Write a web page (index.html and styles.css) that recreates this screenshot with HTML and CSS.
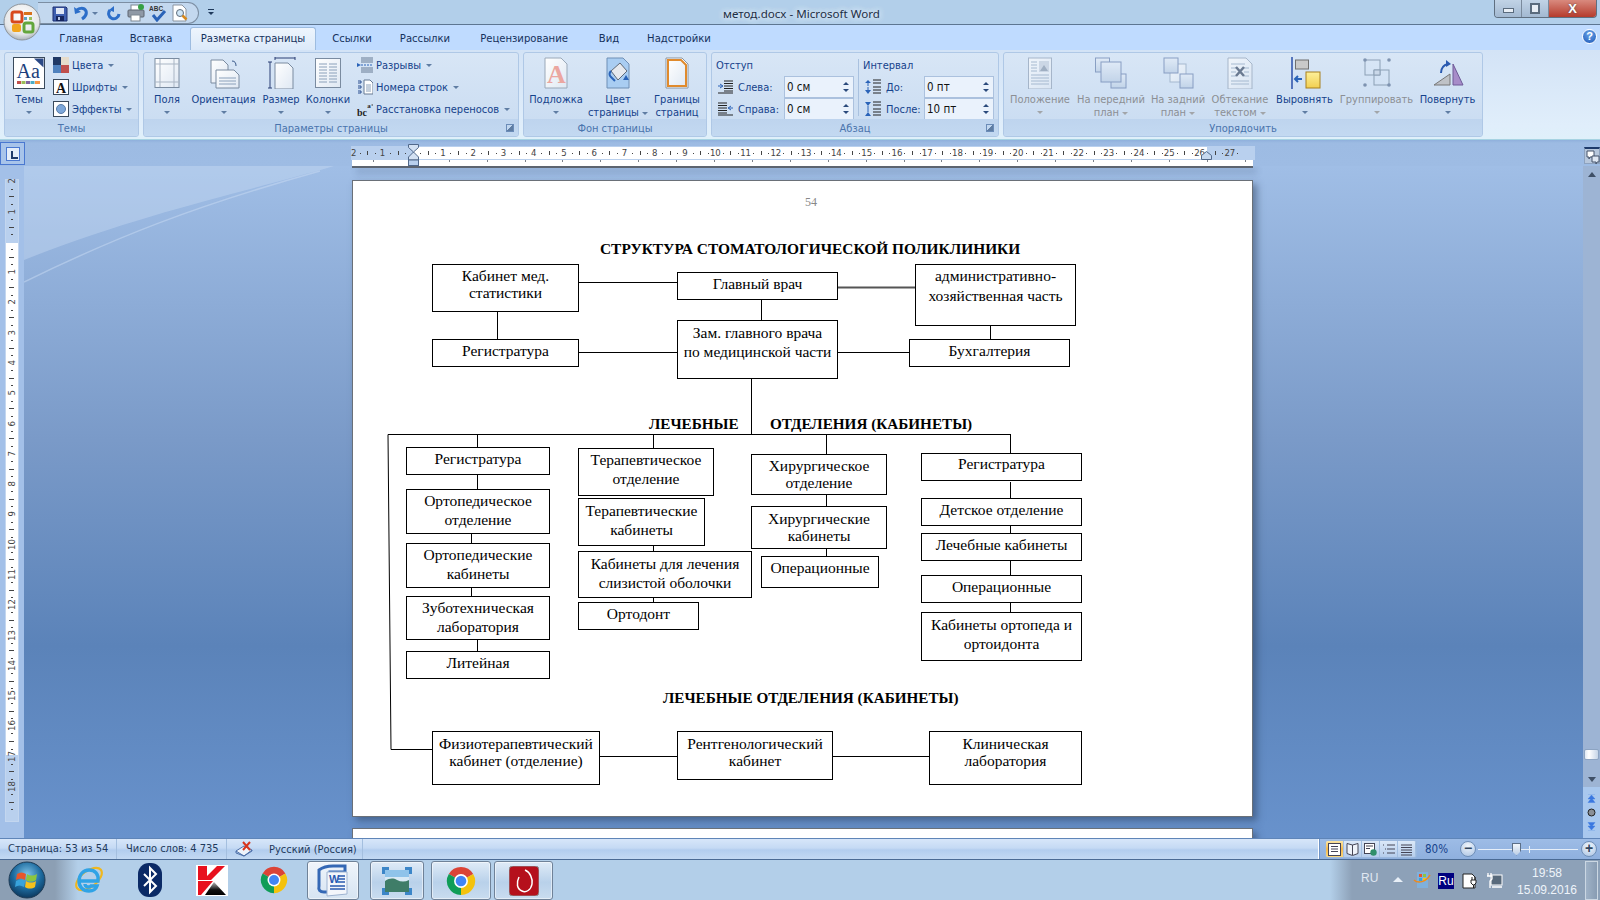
FILE: index.html
```html
<!DOCTYPE html>
<html lang="ru">
<head>
<meta charset="utf-8">
<title>метод.docx - Microsoft Word</title>
<link rel="stylesheet" href="styles.css">
</head>
<body>
<svg class="defs" width="0" height="0">
  <defs>
    <linearGradient id="pg" x1="0" y1="0" x2="1" y2="1"><stop offset="0" stop-color="#fff"/><stop offset="1" stop-color="#dfe8f3"/></linearGradient>
    <linearGradient id="sq" x1="0" y1="0" x2="0" y2="1"><stop offset="0" stop-color="#e6eef8"/><stop offset="1" stop-color="#b8cbe2"/></linearGradient>
    <linearGradient id="yl" x1="0" y1="0" x2="0" y2="1"><stop offset="0" stop-color="#fdf09a"/><stop offset="1" stop-color="#f2cf50"/></linearGradient>
    <linearGradient id="kb" x1="0" y1="0" x2="0" y2="1"><stop offset="0" stop-color="#b8b8b8"/><stop offset=".6" stop-color="#111"/><stop offset="1" stop-color="#000"/></linearGradient>
    <radialGradient id="orbg" cx=".5" cy=".35" r=".7"><stop offset="0" stop-color="#7fc4e8"/><stop offset=".55" stop-color="#1d6b9f"/><stop offset="1" stop-color="#0a2f52"/></radialGradient>
    <radialGradient id="offg" cx=".5" cy=".35" r=".7"><stop offset="0" stop-color="#fff"/><stop offset=".7" stop-color="#e4e6e8"/><stop offset="1" stop-color="#9aa3ab"/></radialGradient>
    <symbol id="chrome" viewBox="0 0 32 32">
      <path d="M16 16L3 8.500A15 15 0 0 1 29 8.500Z" fill="#db4437"/>
      <path d="M16 16L16 31A15 15 0 0 1 3 8.500Z" fill="#0f9d58"/>
      <path d="M16 16L29 8.500A15 15 0 0 1 16 31Z" fill="#f4c20d"/>
      <circle cx="16" cy="16" r="7.400" fill="#fff"/><circle cx="16" cy="16" r="5.700" fill="#4285f4"/>
    </symbol>
  </defs>
</svg>

<header class="titlebar">
  <div class="office">
    <svg width="38" height="38" viewBox="0 0 38 38"><circle cx="19" cy="19" r="18" fill="url(#offg)" stroke="#8d949b"/><rect x="9" y="9" width="10" height="10" rx="2" fill="none" stroke="#d8481c" stroke-width="3"/><rect x="9" y="21" width="9" height="8" rx="2" fill="#f1a51e"/><rect x="21" y="20" width="9" height="9" rx="2" fill="none" stroke="#63a63c" stroke-width="3"/><rect x="21" y="9" width="8" height="3" fill="#d8721c"/><rect x="21" y="14" width="3" height="3" fill="#5aa4c8"/><rect x="26" y="14" width="3" height="3" fill="#9cc05a"/></svg>
  </div>
  <div class="qat">
    <svg class="q1" width="16" height="16" viewBox="0 0 16 16"><path d="M1 1h13l1 1v13H1z" fill="#3e5fb0" stroke="#1d2f70"/><rect x="4" y="2" width="8" height="6" fill="#dfe6f5"/><rect x="4" y="10" width="8" height="5" fill="#16265e"/><rect x="6" y="11" width="2" height="3" fill="#b8c6e6"/></svg>
    <svg class="q2" width="16" height="16" viewBox="0 0 16 16"><path d="M3 6c2-3 8-4 10 0 1 3-1 6-4 8" fill="none" stroke="#2c6ec9" stroke-width="3"/><path d="M1 2l1 7 6-2z" fill="#2c6ec9"/></svg>
    <i class="car q3"></i>
    <svg class="q4" width="16" height="16" viewBox="0 0 16 16"><path d="M13 9a5.200 5.200 0 1 1-9-4" fill="none" stroke="#2c6ec9" stroke-width="3"/><path d="M8 1v6l-5-2z" fill="#2c6ec9"/></svg>
    <svg class="q5" width="18" height="18" viewBox="0 0 18 18"><rect x="4" y="1" width="9" height="6" fill="#fff" stroke="#7d8792"/><rect x="1" y="6" width="16" height="7" rx="1" fill="#8f99a6" stroke="#5c6570"/><rect x="4" y="11" width="9" height="6" fill="#fff" stroke="#7d8792"/><circle cx="14" cy="3" r="3" fill="#36a043"/></svg>
    <svg class="q6" width="18" height="18" viewBox="0 0 18 18"><text x="0" y="6.500" class="abc">ABC</text><path d="M4 11l4 5 8-9" fill="none" stroke="#2a63b8" stroke-width="3"/></svg>
    <svg class="q7" width="16" height="18" viewBox="0 0 16 18"><path d="M1 1h9l4 4v12H1z" fill="#fff" stroke="#8a94a0"/><circle cx="8" cy="9" r="3.500" fill="#cfe6f7" stroke="#5d6b7a"/><path d="M10.500 11.500l4 4" stroke="#d78a1e" stroke-width="2.500"/></svg>
  </div>
  <div class="qover"><b></b><i class="car"></i></div>
  <div class="wtitle">метод.docx - Microsoft Word</div>
  <div class="wctl">
    <div class="wb"><span class="wmin"></span></div>
    <div class="wb"><span class="wmax"></span></div>
    <div class="wb wclose">X</div>
  </div>
</header>

<nav class="tabs">
  <span class="tab t1">Главная</span>
  <span class="tab t2">Вставка</span>
  <span class="tab active">Разметка страницы</span>
  <span class="tab t4">Ссылки</span>
  <span class="tab t5">Рассылки</span>
  <span class="tab t6">Рецензирование</span>
  <span class="tab t7">Вид</span>
  <span class="tab t8">Надстройки</span>
  <span class="help">?</span>
</nav>

<section class="ribbon">
  <div class="group g1">
    <div class="gbody">
      <div class="big">
        <svg width="32" height="32" viewBox="0 0 32 32"><rect x=".5" y=".5" width="31" height="31" fill="#fff" stroke="#3a4a5c"/><path d="M21 1.500h9.500v9z" fill="#2c4a86"/><text x="3.500" y="21" class="aa">Aa</text><rect x="4" y="24" width="4" height="3" fill="#c0504d"/><rect x="8.500" y="24" width="4" height="3" fill="#9bbb59"/><rect x="13" y="24" width="4" height="3" fill="#8064a2"/><rect x="17.500" y="24" width="4" height="3" fill="#4bacc6"/><rect x="22" y="24" width="5" height="3" fill="#f79646"/></svg>
        <span class="lab">Темы</span><i class="car"></i>
      </div>
      <div class="smalls">
        <div class="srow"><svg width="16" height="16" viewBox="0 0 16 16"><rect width="8" height="8" fill="#1f3864"/><rect x="8" width="8" height="8" fill="#e6dccb"/><rect y="8" width="8" height="8" fill="#4f81bd"/><rect x="8" y="8" width="8" height="8" fill="#c0504d"/></svg><span>Цвета</span><i class="car"></i></div>
        <div class="srow"><svg width="16" height="16" viewBox="0 0 16 16"><rect x=".5" y=".5" width="15" height="15" fill="#fff" stroke="#3a4a5c"/><text x="3" y="13.500" class="fa">A</text></svg><span>Шрифты</span><i class="car"></i></div>
        <div class="srow"><svg width="16" height="16" viewBox="0 0 16 16"><rect x=".5" y=".5" width="15" height="15" fill="#fff" stroke="#3a4a5c"/><circle cx="8" cy="8" r="4.500" fill="#7da7da" stroke="#5a7da8"/></svg><span>Эффекты</span><i class="car"></i></div>
      </div>
    </div>
    <div class="glabel">Темы</div>
  </div>

  <div class="group g2">
    <div class="gbody">
      <div class="big">
        <svg width="32" height="32" viewBox="0 0 32 32"><rect x="4" y="1.500" width="24" height="29" fill="url(#pg)" stroke="#7a8ba0"/><path d="M9 2v28M23 2v28M4 7h24M4 25h24" stroke="#a9b5c4"/></svg>
        <span class="lab">Поля</span><i class="car"></i>
      </div>
      <div class="big">
        <svg width="32" height="32" viewBox="0 0 32 32"><path d="M3 3h12l5 5v18H3z" fill="url(#pg)" stroke="#7a8ba0"/><path d="M8 13h18l5 5v13H8z" fill="url(#pg)" stroke="#7a8ba0"/><path d="M11 21h17M11 24h17M11 27h17" stroke="#8aa0ba"/><path d="M24 4c3 0 4 2 4 5" fill="none" stroke="#3a5a8a"/></svg>
        <span class="lab">Ориентация</span><i class="car"></i>
      </div>
      <div class="big">
        <svg width="32" height="32" viewBox="0 0 32 32"><path d="M10 6h13l5 5v21H10z" fill="url(#pg)" stroke="#7a8ba0"/><path d="M10 1h20M10 0v3M30 0v3M5 5v26M3 5h4M3 31h4" stroke="#2b3f75"/></svg>
        <span class="lab">Размер</span><i class="car"></i>
      </div>
      <div class="big">
        <svg width="32" height="32" viewBox="0 0 32 32"><rect x="3.500" y="1.500" width="25" height="29" fill="url(#pg)" stroke="#7a8ba0"/><path d="M7 7h8M17 7h8M7 10h8M17 10h8M7 13h8M17 13h8M7 16h8M17 16h8M7 19h8M17 19h8M7 22h8M17 22h8M7 25h8M17 25h8" stroke="#8aa0ba"/></svg>
        <span class="lab">Колонки</span><i class="car"></i>
      </div>
      <div class="smalls">
        <div class="srow"><svg width="16" height="16" viewBox="0 0 16 16"><path d="M4 1h12M4 3h12M4 5h12M4 11h12M4 13h12M4 15h12" stroke="#667a94"/><path d="M0 6l4 2-4 2z" fill="#2a63b8"/><path d="M4 8h12" stroke="#2a63b8" stroke-dasharray="2 1"/></svg><span>Разрывы</span><i class="car"></i></div>
        <div class="srow"><svg width="16" height="16" viewBox="0 0 16 16"><path d="M7 1h6l3 3v11H7z" fill="#fff" stroke="#667a94"/><path d="M9 6h5M9 8h5M9 10h5M9 12h5" stroke="#8aa0ba"/><path d="M1 2h3v2H1M1 7h3v2H1M1 12h3v2H1" fill="none" stroke="#2a4f90"/></svg><span>Номера строк</span><i class="car"></i></div>
        <div class="srow"><svg width="16" height="16" viewBox="0 0 16 16"><text x="0" y="15" class="bc">bc</text><text x="10.200" y="7" class="bc2">a</text><path d="M14.500 4H16" stroke="#333"/></svg><span>Расстановка переносов</span><i class="car"></i></div>
      </div>
    </div>
    <div class="glabel">Параметры страницы</div>
    <i class="launch l2"></i>
  </div>

  <div class="group g3">
    <div class="gbody">
      <div class="big">
        <svg width="32" height="32" viewBox="0 0 32 32"><path d="M5 1h16l6 6v24H5z" fill="url(#pg)" stroke="#9aa8b8"/><text x="7" y="26" class="wm">A</text></svg>
        <span class="lab">Подложка</span><i class="car"></i>
      </div>
      <div class="big">
        <svg width="32" height="32" viewBox="0 0 32 32"><path d="M5 1h16l6 6v24H5z" fill="#a9cdf2" stroke="#6f8fb5"/><path d="M9 14l9-8 7 8-9 9z" fill="#e6e9ee" stroke="#606a78"/><path d="M9 14c-2 2-2 4 0 6l4 4" fill="none" stroke="#2a63b8" stroke-width="2"/><path d="M24 18l3 5h-6z" fill="#2a63b8"/></svg>
        <span class="lab">Цвет<br>страницы <i class="car"></i></span>
      </div>
      <div class="big">
        <svg width="32" height="32" viewBox="0 0 32 32"><path d="M5 1h16l6 6v24H5z" fill="#fff" stroke="#8a94a0"/><path d="M7 3h13l5 5v21H7z" fill="url(#pg)" stroke="#e08a2c" stroke-width="2"/></svg>
        <span class="lab">Границы<br>страниц</span>
      </div>
    </div>
    <div class="glabel">Фон страницы</div>
  </div>

  <div class="group g4">
    <div class="gbody para">
      <div class="pcol pa">
        <div class="phead">Отступ</div>
        <div class="prow">
          <svg width="15" height="14" viewBox="0 0 15 14"><path d="M6 1h9M6 3.500h9M6 6h9M6 8.500h9M6 11h9M0 13h15" stroke="#222"/><path d="M0 6h4M2 4l3 2-3 2" fill="none" stroke="#2a63b8"/></svg>
          <label>Слева:</label><div class="spin"><span>0 см</span><em><i class="up"></i><i class="dn"></i></em></div>
        </div>
        <div class="prow">
          <svg width="15" height="14" viewBox="0 0 15 14"><path d="M0 1h9M0 3.500h9M0 6h9M0 8.500h9M0 11h9M0 13h15" stroke="#222"/><path d="M15 6h-4M13 4l-3 2 3 2" fill="none" stroke="#2a63b8"/></svg>
          <label>Справа:</label><div class="spin"><span>0 см</span><em><i class="up"></i><i class="dn"></i></em></div>
        </div>
      </div>
      <div class="pcol pb">
        <div class="phead">Интервал</div>
        <div class="prow">
          <svg width="16" height="16" viewBox="0 0 16 16"><path d="M8 1h8M8 4h8M8 11h8M8 14h8M8 8h8" stroke="#222"/><path d="M3 1l3 3H0zM0 11h6l-3 4z" fill="#2a63b8"/><path d="M3 4v3M3 8v3" stroke="#2a63b8"/></svg>
          <label>До:</label><div class="spin"><span>0 пт</span><em><i class="up"></i><i class="dn"></i></em></div>
        </div>
        <div class="prow">
          <svg width="16" height="16" viewBox="0 0 16 16"><path d="M8 1h8M8 4h8M8 11h8M8 14h8M8 8h8" stroke="#222"/><path d="M0 1h6L3 5zM3 11l3 4H0z" fill="#2a63b8"/><path d="M3 5v3M3 8v3" stroke="#2a63b8"/></svg>
          <label>После:</label><div class="spin"><span>10 пт</span><em><i class="up"></i><i class="dn"></i></em></div>
        </div>
      </div>
    </div>
    <div class="glabel">Абзац</div>
    <i class="launch l4"></i>
  </div>

  <div class="group g5">
    <div class="gbody">
      <div class="big off">
        <svg width="32" height="32" viewBox="0 0 32 32"><rect x="4.500" y="1" width="23" height="31" fill="url(#pg)" stroke="#8a9ab0"/><path d="M7 5h6M7 8h6M7 11h6M7 14h6M7 18h18M7 21h18M7 24h18M7 27h18" stroke="#8aa0ba"/><rect x="15" y="4" width="10" height="11" fill="#c5cfdc"/><path d="M16 14l4-6 4 6z" fill="#7f8fa3"/></svg>
        <span class="lab">Положение</span><i class="car"></i>
      </div>
      <div class="big off">
        <svg width="32" height="32" viewBox="0 0 32 32"><rect x=".5" y="1" width="14" height="14" fill="url(#sq)" stroke="#5a75a5"/><rect x="16" y="17" width="15" height="14" fill="url(#sq)" stroke="#5a75a5"/><rect x="6" y="5" width="20" height="20" fill="url(#sq)" stroke="#5a75a5"/></svg>
        <span class="lab">На передний<br>план <i class="car"></i></span>
      </div>
      <div class="big off">
        <svg width="32" height="32" viewBox="0 0 32 32"><rect x="8" y="7" width="16" height="18" fill="url(#pg)" stroke="#8aa0ba"/><rect x="2" y="1" width="14" height="15" fill="url(#sq)" stroke="#5a75a5"/><rect x="18" y="17" width="13" height="14" fill="url(#sq)" stroke="#5a75a5"/></svg>
        <span class="lab">На задний<br>план <i class="car"></i></span>
      </div>
      <div class="big off">
        <svg width="32" height="32" viewBox="0 0 32 32"><path d="M4 1h18l6 6v25H4z" fill="url(#pg)" stroke="#8a9ab0"/><path d="M7 7h14M7 11h5M20 11h5M7 15h5M20 15h5M7 19h5M20 19h5M7 24h18M7 27h18" stroke="#8aa0ba"/><path d="M12 10l8 9M20 10l-8 9" stroke="#2a3a55" stroke-width="2.500"/></svg>
        <span class="lab">Обтекание<br>текстом <i class="car"></i></span>
      </div>
      <div class="big">
        <svg width="32" height="32" viewBox="0 0 32 32"><path d="M3 0v32" stroke="#2b4fa8" stroke-width="1.500"/><rect x="6.500" y="3" width="13" height="9" fill="#c9c9c9" stroke="#6f6f6f"/><rect x="17" y="15" width="14" height="16" fill="url(#yl)" stroke="#a8801f"/><path d="M13 22H6M9 19l-3 3 3 3" fill="none" stroke="#2a63b8" stroke-width="2"/></svg>
        <span class="lab">Выровнять</span><i class="car"></i>
      </div>
      <div class="big off">
        <svg width="32" height="32" viewBox="0 0 32 32"><rect x="4" y="3" width="15" height="15" fill="none" stroke="#62788f"/><rect x="13" y="13" width="15" height="15" fill="none" stroke="#62788f"/><path d="M13 13h6v5h-6z" fill="#c5d2e2" stroke="#62788f"/><circle cx="4" cy="3" r="1.800" fill="#4c6488"/><circle cx="28" cy="3" r="1.800" fill="#4c6488"/><circle cx="4" cy="28" r="1.800" fill="#4c6488"/><circle cx="28" cy="28" r="1.800" fill="#4c6488"/></svg>
        <span class="lab">Группировать</span><i class="car"></i>
      </div>
      <div class="big">
        <svg width="32" height="32" viewBox="0 0 32 32"><path d="M18 28H2L18 17z" fill="#bfc2c7" stroke="#777"/><path d="M21 7l10 21H21z" fill="#a78cc9" stroke="#6e5a98"/><path d="M9 16c0-5 3-8 7-9" fill="none" stroke="#2a5ab0" stroke-width="2"/><path d="M14 3l5 4-5 3z" fill="#2a5ab0"/></svg>
        <span class="lab">Повернуть</span><i class="car"></i>
      </div>
    </div>
    <div class="glabel">Упорядочить</div>
  </div>
</section>

<div class="rulerrow">
  <div class="tabbtn"><span></span></div>
  <div class="hruler">
    <div class="hcells">
      <span>2</span><span>1</span><span></span><span>1</span><span>2</span><span>3</span><span>4</span><span>5</span><span>6</span><span>7</span><span>8</span><span>9</span><span>10</span><span>11</span><span>12</span><span>13</span><span>14</span><span>15</span><span>16</span><span>17</span><span>18</span><span>19</span><span>20</span><span>21</span><span>22</span><span>23</span><span>24</span><span>25</span><span>26</span><span>27</span>
    </div>
    <svg class="mark-l" width="11" height="22" viewBox="0 0 11 22"><path d="M.5.5h10v3L5.500 8l5 5v3H.5v-3l5-5-5-4.500z" fill="#d3e1f3" stroke="#51688a"/><rect x=".5" y="16" width="10" height="5.500" fill="#b9d0ee" stroke="#51688a"/></svg>
    <svg class="mark-r" width="11" height="9" viewBox="0 0 11 9"><path d="M5.500.5l5 4v4H.5v-4z" fill="#c7d9f0" stroke="#51688a"/></svg>
  </div>
  <div class="rulericon">
    <svg width="14" height="14" viewBox="0 0 14 14"><path d="M1 1h7v6H4l-1 2V7H1z" fill="#fff" stroke="#44536a"/><path d="M6 6h7v6h-2l-1 2v-2H6z" fill="#dfe7f3" stroke="#44536a"/></svg>
  </div>
</div>

<main class="work">
  <div class="vruler">
    <div class="vcells">
      <span><b>2</b></span><span><b>1</b></span><span></span><span><b>1</b></span><span><b>2</b></span><span><b>3</b></span><span><b>4</b></span><span><b>5</b></span><span><b>6</b></span><span><b>7</b></span><span><b>8</b></span><span><b>9</b></span><span><b>10</b></span><span><b>11</b></span><span><b>12</b></span><span><b>13</b></span><span><b>14</b></span><span><b>15</b></span><span><b>16</b></span><span><b>17</b></span><span><b>18</b></span><span></span>
    </div>
  </div>
  <div class="canvas">
    <svg class="swoosh" width="340" height="130" viewBox="0 0 340 130"><path d="M0 94C120 46 230 24 310 0H0z" fill="#c9dcf3" fill-opacity=".42"/><path d="M0 116C90 72 170 40 296 5" fill="none" stroke="#c9dcf3" stroke-opacity=".5" stroke-width="1.500"/></svg>
    <div class="prevpage"></div>
    <article class="page">
      <div class="diagram">
        <svg class="wires" width="900" height="633" viewBox="0 0 900 633">
          <path class="w" d="M226 98.500H324M408.500 116V136M144.500 128V155M637.500 140V155M226 168.500H324M485 168.500H556M398.500 195V250.500M35 250.500H657.500M35 250.500L38 565.500H79M124.500 250V263M300.500 250V264M473.500 250V270M657.500 250V270M124.500 291V305M118.500 350V359M118.500 404V412M124.500 456V467M300.500 362V367M300.500 414V418M473.500 311V322M473.500 365V372M657.500 298V314M657.500 342V349M657.500 377V391M657.500 419V428M247 572.500H324M480 572.500H576"/>
          <path class="wg" d="M485 103.500H562"/>
        </svg>
        <div class="pnum">54</div>
        <h1 class="h-main">СТРУКТУРА СТОМАТОЛОГИЧЕСКОЙ ПОЛИКЛИНИКИ</h1>
        <h2 class="h-a">ЛЕЧЕБНЫЕ</h2>
        <h2 class="h-b">ОТДЕЛЕНИЯ (КАБИНЕТЫ)</h2>
        <h2 class="h-c">ЛЕЧЕБНЫЕ ОТДЕЛЕНИЯ (КАБИНЕТЫ)</h2>

        <div class="node n-a1 l17">Кабинет мед.<br>статистики</div>
        <div class="node n-a2">Главный врач</div>
        <div class="node n-a3 l20">административно-<br>хозяйственная часть</div>
        <div class="node n-a4">Регистратура</div>
        <div class="node n-a5 l19 dn1">Зам. главного врача<br>по медицинской части</div>
        <div class="node n-a6">Бухгалтерия</div>

        <div class="node n-b1">Регистратура</div>
        <div class="node n-b2 l19">Ортопедическое<br>отделение</div>
        <div class="node n-b3 l19">Ортопедические<br>кабинеты</div>
        <div class="node n-b4 l19">Зуботехническая<br>лаборатория</div>
        <div class="node n-b5">Литейная</div>

        <div class="node n-c1 l19">Терапевтическое<br>отделение</div>
        <div class="node n-c2 l19 dn1">Терапевтические<br>кабинеты</div>
        <div class="node n-c3 l19 dn1">Кабинеты для лечения<br>слизистой оболочки</div>
        <div class="node n-c4">Ортодонт</div>

        <div class="node n-d1 l17">Хирургическое<br>отделение</div>
        <div class="node n-d2 l17 dn1">Хирургические<br>кабинеты</div>
        <div class="node n-d3">Операционные</div>

        <div class="node n-e1 up1">Регистратура</div>
        <div class="node n-e2">Детское отделение</div>
        <div class="node n-e3">Лечебные кабинеты</div>
        <div class="node n-e4">Операционные</div>
        <div class="node n-e5 l19 dn1">Кабинеты ортопеда и<br>ортоидонта</div>

        <div class="node n-f1 l17 dn1">Физиотерапевтический<br>кабинет (отделение)</div>
        <div class="node n-f2 l17 dn1">Рентгенологический<br>кабинет</div>
        <div class="node n-f3 l17 dn1">Клиническая<br>лаборатория</div>
      </div>
    </article>
    <div class="nextpage"></div>
  </div>
  <aside class="scroll">
    <div class="sb-btn"><i class="up"></i></div>
    <div class="sb-track"><div class="sb-thumb"></div></div>
    <div class="sb-btn"><i class="dn"></i></div>
    <div class="sb-browse">
      <svg width="9" height="9" viewBox="0 0 9 9"><path d="M1 0h7M4.500 1L8 5H1zM4.500 4L8 8.500H1z" fill="#3b78e0" stroke="#3b78e0" stroke-width=".4"/></svg>
      <svg width="9" height="9" viewBox="0 0 9 9"><circle cx="4.500" cy="4.500" r="3.500" fill="#8a8f96" stroke="#222"/></svg>
      <svg width="9" height="9" viewBox="0 0 9 9"><path d="M1 9h7M4.500 8L8 4H1zM4.500 5L8 .5H1z" fill="#3b78e0" stroke="#3b78e0" stroke-width=".4"/></svg>
    </div>
  </aside>
</main>

<footer class="status">
  <div class="st st1">Страница: 53 из 54</div>
  <div class="st st2">Число слов: 4 735</div>
  <div class="st st3">
    <svg width="18" height="16" viewBox="0 0 18 16"><path d="M1 10l8-5 8 4-8 6z" fill="#eef3fa" stroke="#4d6fa8"/><path d="M1 10v2l8 3 8-5V9" fill="none" stroke="#4d6fa8"/><path d="M8 1l7 8M15 1L8 9" stroke="#d8341c" stroke-width="2"/></svg>
    <span>Русский (Россия)</span>
  </div>
  <div class="st-right">
    <div class="views">
      <span class="vw on"><svg width="13" height="13" viewBox="0 0 13 13"><rect x=".5" y=".5" width="12" height="12" fill="#fff" stroke="#445"/><path d="M3 3.500h7M3 6h7M3 8.500h7" stroke="#445"/></svg></span>
      <span class="vw"><svg width="13" height="13" viewBox="0 0 13 13"><path d="M6.500 2L1 .5v10l5.500 2 5.500-2V.5z" fill="#eef3fa" stroke="#445"/><path d="M6.500 2v10" stroke="#445"/></svg></span>
      <span class="vw"><svg width="13" height="13" viewBox="0 0 13 13"><rect x=".5" y=".5" width="10" height="10" fill="#fff" stroke="#445"/><path d="M2 3h7M2 5.500h4" stroke="#445"/><circle cx="9.500" cy="9.500" r="3.200" fill="#2f8f6a"/></svg></span>
      <span class="vw"><svg width="13" height="13" viewBox="0 0 13 13"><path d="M5 2h8M1 2h1M5 6h8M3 6h1M5 10h8M1 10h1" stroke="#445"/></svg></span>
      <span class="vw"><svg width="13" height="13" viewBox="0 0 13 13"><path d="M1 2h11M1 4.500h11M1 7h11M1 9.500h11M1 12h11" stroke="#445"/></svg></span>
    </div>
    <span class="zoomv">80%</span>
    <span class="zb">−</span>
    <div class="slider"><i class="sl-tick"></i><i class="sl-th"></i></div>
    <span class="zb">+</span>
  </div>
</footer>

<footer class="taskbar">
  <div class="orb">
    <svg width="38" height="38" viewBox="0 0 38 38"><circle cx="19" cy="19" r="18" fill="url(#orbg)" stroke="#1f3b55"/><path d="M9 13c3-2 6-2 9 0l-1 6c-3-2-6-2-9 0z" fill="#e8562a"/><path d="M19 13c3 2 6 2 10 0l-1 6c-3 2-7 2-10 0z" fill="#8cc63e"/><path d="M8 20c3-2 6-2 9 0l-1 6c-3-2-6-2-9 0z" fill="#38a3dc"/><path d="M18 20c3 2 7 2 10 0l-1 6c-3 2-7 2-10 0z" fill="#f7c11c"/></svg>
  </div>
  <div class="pin">
    <svg width="32" height="32" viewBox="0 0 32 32"><ellipse cx="16" cy="15" rx="15" ry="8" transform="rotate(-38 16 15)" fill="none" stroke="#f0b71d" stroke-width="2.200"/><path d="M7 17h18c1-7-3-11-9-11-6 0-10 5-10 11 0 6 4 10 10 10 4 0 7-2 8-5h-6c-2 2-6 1-6-2" fill="none" stroke="#2fa3e6" stroke-width="3.400"/></svg>
  </div>
  <div class="pin">
    <svg width="24" height="34" viewBox="0 0 24 34"><rect width="24" height="34" rx="11" fill="#0b2a66"/><path d="M6 11l12 12-6 6V5l6 6L6 23" fill="none" stroke="#fff" stroke-width="2"/></svg>
  </div>
  <div class="pin">
    <svg width="32" height="31" viewBox="0 0 32 31"><rect width="32" height="31" fill="#fff"/><path d="M2 1h9v10L21 1h8L15 15H2z" fill="#e8101e"/><path d="M2 16h15L5 30H2z" fill="#e8101e"/><path d="M18 17l12 13H9z" fill="url(#kb)"/><path d="M19 16l11 0v11z" fill="#fff"/></svg>
  </div>
  <div class="pin"><svg width="28" height="28"><use href="#chrome"/></svg></div>
  <div class="tbtn b-word">
    <svg width="34" height="34" viewBox="0 0 34 34"><path d="M3 6c4-3 8-4 14-4h12v6H14v20H8c-4 0-6-2-5-6z" fill="none" stroke="#3468b5" stroke-width="3"/><path d="M11 8h20v22l-20 2z" fill="#f3f6fb" stroke="#9fb4d2"/><text x="13" y="19" class="wd">W</text><path d="M22 12h7M22 15h7M22 18h7M14 22h15M14 25h15" stroke="#2a5ab0" stroke-width="1.500"/></svg>
  </div>
  <div class="tbtn b-photo">
    <svg width="30" height="28" viewBox="0 0 30 28"><rect x="3" y="3" width="24" height="22" fill="#d8e9f5"/><path d="M3 14c5-3 8-3 12-1s8 2 12 0v12H3z" fill="#3f7d68"/><rect x="3" y="3" width="24" height="7" fill="#8fc3ea"/><path d="M0 7V0h7v3H3v4zM23 0h7v7h-3V3h-4zM30 21v7h-7v-3h4v-4zM7 28H0v-7h3v4h4z" fill="#3c86c8"/></svg>
  </div>
  <div class="tbtn b-chrome"><svg width="30" height="30"><use href="#chrome"/></svg></div>
  <div class="tbtn b-red">
    <svg width="30" height="30" viewBox="0 0 30 30"><rect width="30" height="30" rx="4" fill="#b5101c" stroke="#8a8a8a"/><path d="M16 4c5 2 8 9 7 14-1 6-6 9-10 7-5-2-6-8-3-14" fill="none" stroke="#fff" stroke-width="1.500"/></svg>
  </div>
  <div class="tray">
    <span class="tr-lang">RU</span>
    <i class="tr-up"></i>
    <svg width="18" height="18" viewBox="0 0 18 18"><path d="M4 1h11v16H4z" fill="#7fb0dc"/><rect x="6" y="3" width="3" height="3" fill="#e8562a"/><rect x="10" y="3" width="3" height="3" fill="#8cc63e"/><rect x="6" y="7" width="3" height="3" fill="#38a3dc"/><rect x="10" y="7" width="3" height="3" fill="#f7c11c"/><path d="M1 9c4 4 12 2 16-5" fill="none" stroke="#ee8a1c" stroke-width="1.500"/></svg>
    <span class="tr-ru">Ru</span>
    <svg width="16" height="17" viewBox="0 0 16 17"><path d="M1 2h9l3 3v11H1z" fill="#fff" stroke="#222"/><path d="M9 8h5v3l-2 2h-1l-2-2zM10 5v3M13 5v3M11.500 13v3" fill="#fff" stroke="#222"/></svg>
    <svg width="17" height="17" viewBox="0 0 17 17"><rect x="5" y="3" width="11" height="10" fill="#586a7c" stroke="#fff"/><path d="M2 1v3M5 1v3M1 4h5v3l-2 2v7M6 15h10" fill="none" stroke="#fff" stroke-width="1.300"/></svg>
    <div class="clock"><span>19:58</span><span>15.09.2016</span></div>
    <div class="showdesk"></div>
  </div>
</footer>
</body>
</html>
```

FILE: styles.css
```css
* { box-sizing: border-box; }
html, body { margin: 0; padding: 0; }
body {
  width: 1600px; height: 900px; overflow: hidden;
  display: flex; flex-direction: column;
  font-family: "DejaVu Sans Condensed", "DejaVu Sans", sans-serif;
  font-size: 11px; color: #1e395b;
  background: #a0bee6;
}
.defs { position: absolute; }

/* title bar */
.titlebar {
  height: 25px; flex: none; position: relative;
  display: flex; align-items: flex-start;
  background: #b2cfea;
  border-bottom: 1px solid #5d7691;
}
.office { position: absolute; left: 3px; top: 3px; z-index: 5; width: 38px; height: 38px; }
.office svg { display: block; }
.qat {
  margin: 2px 0 0 38px; width: 161px; height: 22px; position: relative;
  background: #c3d8ef; border: 1px solid #7c8ea3; border-left: 0;
  border-radius: 0 11px 11px 0;
}
.qat svg, .qat .car { position: absolute; }
.q1 { left: 14px; top: 3px; }
.q2 { left: 35px; top: 2px; }
.q3 { left: 54px; top: 9px; border-top-color: #5f7894; }
.q4 { left: 68px; top: 2px; }
.q5 { left: 89px; top: 1px; }
.q6 { left: 111px; top: 1px; }
.q7 { left: 134px; top: 1px; }
.abc { font: bold 6.500px "Liberation Sans", sans-serif; fill: #333; }
.qover { margin: 9px 0 0 9px; width: 6px; display: flex; flex-direction: column; gap: 2px; align-items: center; }
.qover b { width: 6px; height: 1px; background: #1e395b; }
.qover .car { border-top-color: #1e395b; }
.wtitle {
  position: absolute; left: 0; right: 0; top: 6px; text-align: center;
  padding-left: 3px;
  font: 11.600px/16px "Noto Sans", sans-serif; color: #1e2e44;
  text-shadow: 0 0 6px #e8f2fb, 0 0 6px #e8f2fb;
}
.wctl {
  position: absolute; left: 1494px; top: 0; width: 103px; height: 18px;
  display: flex; border: 1px solid #5f6f80; border-top: 0; border-radius: 0 0 4px 4px; overflow: hidden;
}
.wb { width: 27px; background: linear-gradient(#c1d3e6, #a3b9d1); border-right: 1px solid #7a8a9c; display: flex; align-items: center; justify-content: center; }
.wmin { width: 11px; height: 5px; margin-top: 4px; background: #e8eef5; border: 1px solid #5a6b7d; }
.wmax { width: 10px; height: 11px; background: #e8eef5; border: 2px solid #5a6b7d; }
.wclose { flex: 1; background: linear-gradient(#d98a7e, #b53b2c); color: #fff; font: bold 13px/16px "Liberation Sans", sans-serif; border: 0; text-shadow: 0 0 2px #444; }

/* tabs */
.tabs {
  height: 25px; flex: none; position: relative;
  background: #bfdbff;
  display: flex; align-items: flex-end;
}
.tab { height: 22px; line-height: 22px; text-align: center; color: #15315c; font-size: 11.200px; white-space: nowrap; }
.t1 { margin-left: 52px; width: 58px; }
.t2 { margin-left: 12px; width: 58px; }
.active {
  margin-left: 10px; width: 126px; height: 23px; line-height: 22px;
  background: linear-gradient(#eef5fd, #dbe9f9);
  border: 1px solid #9dbce0; border-bottom: 0; border-radius: 3px 3px 0 0;
}
.t4 { margin-left: 8px; width: 56px; }
.t5 { margin-left: 14px; width: 62px; }
.t6 { margin-left: 18px; width: 100px; }
.t7 { margin-left: 20px; width: 30px; }
.t8 { margin-left: 19px; width: 72px; }
.help {
  position: absolute; left: 1582px; top: 4px; width: 15px; height: 15px; border-radius: 50%;
  background: radial-gradient(circle at 50% 30%, #6aa4e8, #1c58b8);
  border: 1px solid #fff; color: #fff; font: bold 11px/13px "Liberation Sans", sans-serif; text-align: center;
}

/* ribbon */
.ribbon {
  height: 90px; flex: none; display: flex; gap: 4px; padding: 2px 0 3px 4px;
  background: linear-gradient(#d3e3f6, #e0eefb 85%, #dff0fa);
  border-bottom: 1px solid #a6d3e2;
}
.group {
  position: relative; height: 85px; display: flex; flex-direction: column;
  border: 1px solid #afc8e6; border-radius: 3px;
  background: linear-gradient(#d8e6f6, #c8dbf1);
  overflow: hidden;
}
.g1 { width: 135px; } .g2 { width: 376px; } .g3 { width: 184px; } .g4 { width: 288px; } .g5 { width: 480px; }
.gbody { flex: 1; display: grid; padding-top: 4px; min-height: 0; }
.g1 .gbody { grid-template-columns: 48px 1fr; }
.g2 .gbody { grid-template-columns: 46px 67px 48px 46px 1fr; }
.g3 .gbody { grid-template-columns: 64px 60px 58px; }
.g5 .gbody { grid-template-columns: 72px 70px 64px 60px 69px 75px 67px; }
.glabel {
  height: 17px; flex: none; text-align: center; line-height: 20px; color: #4a74ad;
  background: linear-gradient(#bed4ee, #c3d9f1);
}
.big { display: flex; flex-direction: column; align-items: center; }
.big svg { flex: none; margin-bottom: 4px; display: block; }
.lab { line-height: 13px; text-align: center; color: #15428b; white-space: nowrap; }
.big > .car { margin-top: 5px; }
.off .lab { color: #8c8f94; }
.off .car { border-top-color: #a2a5a9; }
.off svg { opacity: .62; }
.car { display: inline-block; width: 0; height: 0; border: 3px solid transparent; border-bottom: 0; border-top: 3px solid #5f7da3; vertical-align: middle; }
.smalls { display: flex; flex-direction: column; margin-top: -3px; }
.g2 .smalls { padding-left: 6px; }
.srow { height: 22px; display: flex; align-items: center; gap: 3px; white-space: nowrap; color: #15428b; }
.srow .car { margin-left: 2px; }
.launch { position: absolute; bottom: 4px; width: 8px; height: 8px; border: 1px solid #6b8cb8; background: linear-gradient(135deg, transparent 45%, #5f7da3 50%); }
.l2 { right: 4px; } .l4 { right: 4px; }

.aa { font: 20px "Liberation Serif", serif; fill: #1c3f7c; }
.fa { font: bold 14px "Liberation Serif", serif; fill: #111; }
.bc { font: bold 10px "Liberation Serif", serif; fill: #222; }
.bc2 { font: bold 7px "Liberation Serif", serif; fill: #222; }
.wm { font: bold 26px "Liberation Serif", serif; fill: #eba6a0; }
.wd { font: bold 11px "Liberation Sans", sans-serif; fill: #2a5ab0; }

.para { display: flex; padding: 0; }
.pcol { height: 100%; }
.pa { width: 147px; padding: 2px 0 0 3px; border-right: 1px solid #a9c1df; height: 57px; margin-top: 6px; }
.pb { padding: 2px 0 0 3px; margin-top: 6px; }
.phead { height: 15px; line-height: 13px; margin-top: -2px; color: #15428b; padding-left: 0; margin-bottom: 2px; }
.pa .phead { margin-left: 1px; }
.pb .phead { margin-left: 1px; }
.prow { height: 22px; display: flex; align-items: center; }
.prow svg { flex: none; margin-left: 3px; }
.prow label { color: #15428b; }
.pa label { width: 46px; margin-left: 5px; }
.pb label { width: 38px; margin-left: 5px; }
.spin {
  width: 70px; height: 22px; display: flex; align-items: center; justify-content: space-between;
  background: #eaf2fc; border: 1px solid #abc1de; padding: 0 4px 0 2px; color: #111; font-size: 11.500px;
}
.spin em { display: flex; flex-direction: column; gap: 4px; }
.up, .dn { display: block; width: 0; height: 0; border: 3px solid transparent; }
.up { border-top: 0; border-bottom: 3px solid #2a4a7c; }
.dn { border-bottom: 0; border-top: 3px solid #2a4a7c; }

/* ruler row */
.rulerrow {
  height: 26px; flex: none; display: flex; align-items: flex-start;
  background: linear-gradient(#8fb0dc 0, #9dbbe3 3px, #9ebce4);
}
.tabbtn {
  width: 25px; height: 23px; margin-top: 2px; flex: none;
  background: #a8c4ea; border: 1px solid #4a78d0; display: flex; align-items: center; justify-content: center;
}
.tabbtn span {
  width: 14px; height: 14px; background: #e4edf9; border: 1px solid #4a78d0; position: relative;
}
.tabbtn span::after { content: ""; position: absolute; left: 4px; top: 3px; width: 5px; height: 6px; border-left: 2px solid #1e3a6a; border-bottom: 2px solid #1e3a6a; }
.hruler {
  margin: 6px 0 0 326px; width: 904px; height: 14px; flex: none; position: relative;
  background: linear-gradient(90deg, #b9d0ee 63px, #fff 63px, #fff 856px, #b9d0ee 856px);
  border: 1px solid #b9d0ee; border-width: 1px 0;
}
.hruler::after {
  content: ""; position: absolute; left: 1.400px; top: 13px; width: 901px; height: 7px;
  border-bottom: 2px solid #5c6470;
  background-color: #fff;
  background-image: repeating-linear-gradient(90deg, #7a8088 0, #7a8088 1px, transparent 1px, transparent 37.900px);
  background-size: 100% 2px; background-position: 21px 0; background-repeat: no-repeat;
}
.hcells { display: flex; overflow: hidden; height: 12px; }
.hcells span {
  flex: 0 0 30.270px; text-align: center; font: 9.500px/12px "DejaVu Sans Condensed", "DejaVu Sans", sans-serif; color: #444;
  background:
    linear-gradient(#444, #444) 7.500px 6px / 1px 1px no-repeat,
    linear-gradient(#444, #444) 22.700px 6px / 1px 1px no-repeat,
    linear-gradient(#444, #444) 0 4px / 1px 4px no-repeat;
}
.hcells span:first-child {
  flex-basis: 16.270px; text-align: left;
  background: linear-gradient(#444, #444) 8.700px 6px / 1px 1px no-repeat;
}
.mark-l, .mark-r { position: absolute; z-index: 2; }
.mark-l { left: 57px; top: -3px; }
.mark-r { left: 850px; top: 4px; }
.rulericon {
  position: absolute; left: 1584px; top: 147px; width: 16px; height: 17px; padding: 1px;
  background: #b7c7dc; border: 1px solid #8da2bf; border-top: 2px solid #1e3a6a;
}
.rulericon svg { display: block; }

/* work area */
.work { flex: 1; min-height: 0; display: flex; overflow: hidden; }
.vruler {
  width: 24px; flex: none; padding: 13px 5px 16px;
  background: #a3c0e8;
}
.vcells {
  width: 14px; height: 643px; overflow: hidden;
  background: linear-gradient(#b9d0ee 64px, #fff 64px, #fff 576px, #b9d0ee 576px);
  box-shadow: 0 0 0 1px #c3d6ef inset;
  display: flex; flex-direction: column;
}
.vcells span {
  flex: 0 0 30.270px; display: flex; align-items: center; justify-content: center; margin: 0;
  background:
    linear-gradient(#444, #444) 6px 7.500px / 2px 1px no-repeat,
    linear-gradient(#444, #444) 6px 22.700px / 2px 1px no-repeat,
    linear-gradient(#444, #444) 4px 0 / 5px 1px no-repeat;
}
.vcells span:first-child { margin-top: -13px; }
.vcells b { writing-mode: vertical-rl; transform: rotate(180deg); font: 9.500px/12px "DejaVu Sans Condensed", "DejaVu Sans", sans-serif; color: #444; }

.canvas {
  flex: 1; min-width: 0; position: relative; overflow: hidden;
  padding-left: 328px;
  background: linear-gradient(#a0bee6 0, #7a9ac8 274px, #5b83b9 480px, #6892cc 672px);
}
.swoosh { position: absolute; left: 0; top: 0; }
.prevpage { position: relative; width: 901px; height: 2px; background: #5c6470; box-shadow: 4px 4px 6px rgba(40,60,90,.45); }
.page {
  position: relative; width: 901px; height: 637px; margin-top: 12px; padding: 4px 0 0 1px;
  background: #fff; outline: 1px solid #6a7078; outline-offset: -1px;
  box-shadow: 4px 4px 7px rgba(40,60,90,.5);
  font: 15.500px "Liberation Serif", serif; color: #000;
}
.diagram { position: relative; width: 900px; height: 633px; }
.nextpage { position: relative; width: 901px; height: 20px; margin-top: 11px; background: #fff; outline: 1px solid #6a7078; outline-offset: -1px; box-shadow: 4px 4px 7px rgba(40,60,90,.5); }
.wires { position: absolute; left: 0; top: 0; }
.w { fill: none; stroke: #000; stroke-width: 1; }
.wg { fill: none; stroke: #555; stroke-width: 2; }

.pnum { position: absolute; left: 0; width: 900px; top: 11px; text-align: center; padding-left: 16px; font-size: 12px; line-height: 14px; color: #888; }
.h-main, .h-a, .h-b, .h-c { position: absolute; margin: 0; font: bold 15.200px/18px "Liberation Serif", serif; white-space: nowrap; }
.h-main { left: 247px; top: 56px; font-size: 15.400px; }
.h-a { left: 296px; top: 231px; }
.h-b { left: 417px; top: 231px; }
.h-c { left: 310px; top: 505px; }

.node {
  position: absolute; background: #fff; border: 1px solid #000;
  text-align: center; white-space: nowrap; line-height: 19px; padding-top: 1px;
}
.l17 { line-height: 17px; padding-top: 2px; }
.l19 { line-height: 19px; padding-top: 1px; }
.l20 { line-height: 20px; padding-top: 1px; }
.l17.dn1 { padding-top: 3px; }
.l19.dn1 { padding-top: 2px; }
.up1 { padding-top: 0; }

.n-a1 { left: 79px; top: 80px; width: 147px; height: 48px; }
.n-a2 { left: 324px; top: 88px; width: 161px; height: 28px; }
.n-a3 { left: 562px; top: 80px; width: 161px; height: 62px; }
.n-a4 { left: 79px; top: 155px; width: 147px; height: 28px; }
.n-a5 { left: 324px; top: 136px; width: 161px; height: 59px; }
.n-a6 { left: 556px; top: 155px; width: 161px; height: 28px; }
.n-b1 { left: 53px; top: 263px; width: 144px; height: 28px; }
.n-b2 { left: 53px; top: 305px; width: 144px; height: 45px; }
.n-b3 { left: 53px; top: 359px; width: 144px; height: 45px; }
.n-b4 { left: 53px; top: 412px; width: 144px; height: 44px; }
.n-b5 { left: 53px; top: 467px; width: 144px; height: 28px; }
.n-c1 { left: 225px; top: 264px; width: 136px; height: 48px; }
.n-c2 { left: 225px; top: 314px; width: 127px; height: 48px; }
.n-c3 { left: 225px; top: 367px; width: 174px; height: 47px; }
.n-c4 { left: 225px; top: 418px; width: 121px; height: 28px; }
.n-d1 { left: 398px; top: 270px; width: 136px; height: 41px; }
.n-d2 { left: 398px; top: 322px; width: 136px; height: 43px; }
.n-d3 { left: 408px; top: 372px; width: 118px; height: 32px; }
.n-e1 { left: 568px; top: 269px; width: 161px; height: 28px; }
.n-e2 { left: 568px; top: 314px; width: 161px; height: 28px; }
.n-e3 { left: 568px; top: 349px; width: 161px; height: 28px; }
.n-e4 { left: 568px; top: 391px; width: 161px; height: 28px; }
.n-e5 { left: 568px; top: 428px; width: 161px; height: 49px; }
.n-f1 { left: 79px; top: 547px; width: 168px; height: 54px; }
.n-f2 { left: 324px; top: 547px; width: 156px; height: 49px; }
.n-f3 { left: 576px; top: 547px; width: 153px; height: 54px; }

/* scrollbar */
.scroll { width: 17px; flex: none; display: flex; flex-direction: column; background: #a9c8ee; }
.sb-btn { height: 16px; flex: none; display: flex; align-items: center; justify-content: center; background: #9db4d4; }
.sb-btn .up { border-width: 0 4px 5px; border-bottom-color: #3f4f66; }
.sb-btn .dn { border-width: 5px 4px 0; border-top-color: #3f4f66; }
.sb-track { flex: 1; display: flex; flex-direction: column; justify-content: flex-end; background: #9db4d4; padding: 0 1px 11px; }
.sb-thumb { height: 11px; background: linear-gradient(90deg, #dfe8f3, #fff 30%, #c6d5e8); border: 1px solid #8da4c2; border-radius: 2px; }
.sb-browse { height: 51px; flex: none; display: flex; flex-direction: column; align-items: center; justify-content: space-around; padding: 5px 0; }

/* status */
.status {
  height: 22px; flex: none; display: flex; align-items: center;
  background: linear-gradient(#d7e6f9, #c5daf4 45%, #b2cdee 55%, #c3d9f3);
  border-top: 1px solid #5f85b8; border-bottom: 1px solid #4a6a94;
  font-size: 11px; color: #1e395b;
}
.st { height: 100%; line-height: 19px; border-right: 1px solid #a4bfdf; white-space: nowrap; }
.st1 { width: 117px; padding-left: 8px; }
.st2 { width: 110px; padding-left: 9px; }
.st3 { width: 136px; padding-left: 8px; display: flex; align-items: center; gap: 16px; }
.st-right {
  margin-left: auto; width: 282px; height: 100%; display: flex; align-items: center;
  padding-left: 6px; border-left: 1px solid #fff; outline: 0;
  background: linear-gradient(#9dbce6, #8fb0de);
  box-shadow: inset 1px 0 0 #6e93c6;
}
.views { display: flex; width: 92px; height: 18px; border: 1px solid #9ab8de; border-radius: 3px; overflow: hidden; background: linear-gradient(#dbe8f8, #b5cdec); }
.vw { flex: 1; display: flex; align-items: center; justify-content: center; border-right: 1px solid #a2bfe2; }
.vw.on { background: linear-gradient(#fbe6a6, #f5b94a 50%, #fbd77e); }
.zoomv { margin-left: 8px; width: 30px; font-size: 11.500px; color: #15428b; }
.zb {
  width: 16px; height: 16px; flex: none; border-radius: 50%; margin-left: 5px; border: 1px solid #6f8fb8;
  background: radial-gradient(circle at 50% 30%, #f1f6fc, #a9c2e2);
  text-align: center; font: bold 14px/13px "Liberation Sans", sans-serif; color: #33475f;
}
.slider { width: 100px; height: 1px; background: #e6eff9; position: relative; margin: 0 -2px 0 2px; }
.sl-tick { position: absolute; left: 51px; top: -3px; width: 1px; height: 7px; background: #e6eff9; }
.sl-th { position: absolute; left: 34px; top: -6px; width: 9px; height: 13px; background: linear-gradient(#f2f6fb, #bccfe6); border: 1px solid #5c6f88; clip-path: polygon(0 0, 100% 0, 100% 65%, 50% 100%, 0 65%); }

/* taskbar */
.taskbar {
  height: 40px; flex: none; display: flex; align-items: center;
  background: linear-gradient(90deg, #8c9fb4 0, #8c9fb4 55px, #b3cfe9 78px);
}
.orb { width: 58px; flex: none; padding: 0 0 0 8px; height: 38px; }
.orb svg, .pin svg, .tbtn svg { display: block; }
.pin { width: 61.600px; flex: none; display: flex; justify-content: center; }
.tbtn {
  height: 39px; margin-top: 1px; flex: none; display: flex; align-items: center; justify-content: center;
  border: 1px solid #6f8298; border-radius: 3px;
  background: linear-gradient(#dfebf7, #b9d1ea 55%, #c9dcef);
  box-shadow: inset 0 0 0 1px rgba(255,255,255,.5);
}
.b-word { margin-left: 3px; width: 52px; background: linear-gradient(#f0f5fb, #d6e4f2); }
.b-photo { margin-left: 11px; width: 54px; }
.b-chrome { margin-left: 7px; width: 60px; }
.b-red { margin-left: 3px; width: 59px; }
.tray {
  margin-left: auto; width: 270px; height: 100%; display: flex; align-items: center; position: relative;
  background: linear-gradient(90deg, #b3cfe9 0, #8da1b8 22px);
  color: #e8f0f8;
}
.tray svg, .tr-lang, .tr-up, .tr-ru, .clock, .showdesk { position: absolute; }
.tr-lang { left: 31px; top: 11px; font: 12px/15px "Liberation Sans", sans-serif; color: #e0e8f2; }
.tr-up { left: 63px; top: 17px; width: 0; height: 0; border: 5px solid transparent; border-top: 0; border-bottom: 5px solid #e8eff7; }
.tray svg:nth-of-type(1) { left: 83px; top: 11px; }
.tr-ru { left: 108px; top: 13px; width: 16px; height: 16px; background: #00007f; color: #fff; font: 12px/16px "Liberation Sans", sans-serif; text-align: center; }
.tray svg:nth-of-type(2) { left: 132px; top: 12px; }
.tray svg:nth-of-type(3) { left: 156px; top: 12px; }
.clock { left: 184px; top: 5px; width: 66px; display: flex; flex-direction: column; align-items: center; font: 12px/17px "Liberation Sans", sans-serif; color: #eef4fa; }
.showdesk { left: 255px; top: 1px; width: 13px; height: 39px; background: linear-gradient(90deg, #9fb2c7, #889cb3); border: 1px solid #cbd7e3; }
```
